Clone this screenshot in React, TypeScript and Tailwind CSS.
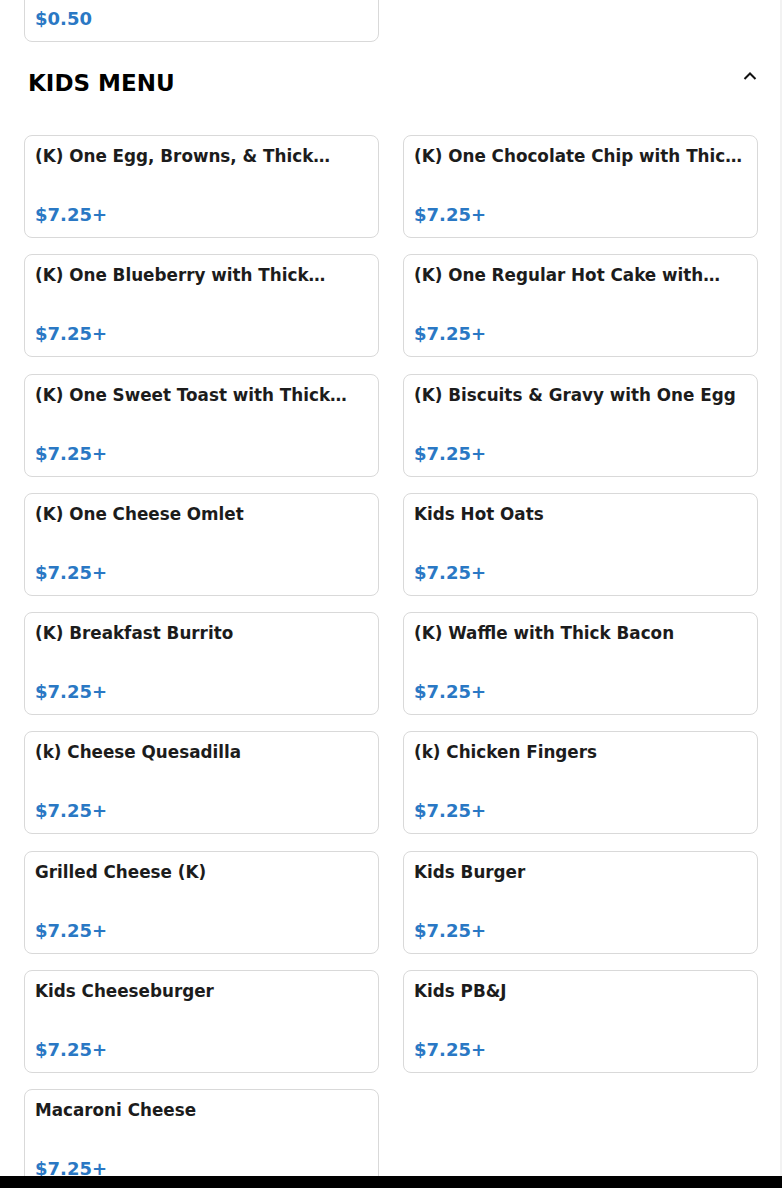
import React from "react";

const items: string[] = [
  "(K) One Egg, Browns, & Thick Bacon",
  "(K) One Chocolate Chip with Thick Bacon",
  "(K) One Blueberry with Thick Bacon",
  "(K) One Regular Hot Cake with Thick Bacon",
  "(K) One Sweet Toast with Thick Bacon",
  "(K) Biscuits & Gravy with One Egg",
  "(K) One Cheese Omlet",
  "Kids Hot Oats",
  "(K) Breakfast Burrito",
  "(K) Waffle with Thick Bacon",
  "(k) Cheese Quesadilla",
  "(k) Chicken Fingers",
  "Grilled Cheese (K)",
  "Kids Burger",
  "Kids Cheeseburger",
  "Kids PB&J",
  "Macaroni Cheese",
];

function Card({ title, price }: { title?: string; price: string }) {
  return (
    <div className="h-[103px] rounded-lg border border-[#d9d9d9] bg-white p-[10px] flex flex-col justify-between">
      <div className="text-[16.8px] leading-[normal] font-bold text-[#1c1c1c] line-clamp-1 break-words">
        {title ? title : "\u00a0"}
      </div>
      <div className="text-[18px] leading-[24px] font-bold text-[#2a78c4]">{price}</div>
    </div>
  );
}

export default function App() {
  return (
    <div
      className="relative h-[1188px] w-full overflow-hidden bg-white"
      style={{ fontFamily: '"DejaVu Sans", Verdana, sans-serif' }}
    >
      <div className="px-6">
        <div className="grid grid-cols-2 gap-x-6 -mt-[61px]">
          <Card title="" price="$0.50" />
        </div>
        <div className="mt-[28px] flex items-start justify-between pl-1">
          <h2 className="text-[23px] leading-[normal] font-bold text-black">KIDS MENU</h2>
          <svg width="14" height="10" viewBox="0 0 14 10" className="mr-[1px] mt-[1px]">
            <polyline points="1.5,8 7,2.5 12.5,8" fill="none" stroke="#111" strokeWidth="2" />
          </svg>
        </div>
        <div className="mt-[39px] grid grid-cols-2 gap-x-6 gap-y-[16.25px]">
          {items.map((t) => (
            <Card key={t} title={t} price="$7.25+" />
          ))}
        </div>
      </div>
      <div className="absolute top-0 right-0 h-full w-[2px] bg-[#f2f2f2]" />
      <div className="fixed bottom-0 left-0 w-full h-[12px] bg-black" />
    </div>
  );
}
